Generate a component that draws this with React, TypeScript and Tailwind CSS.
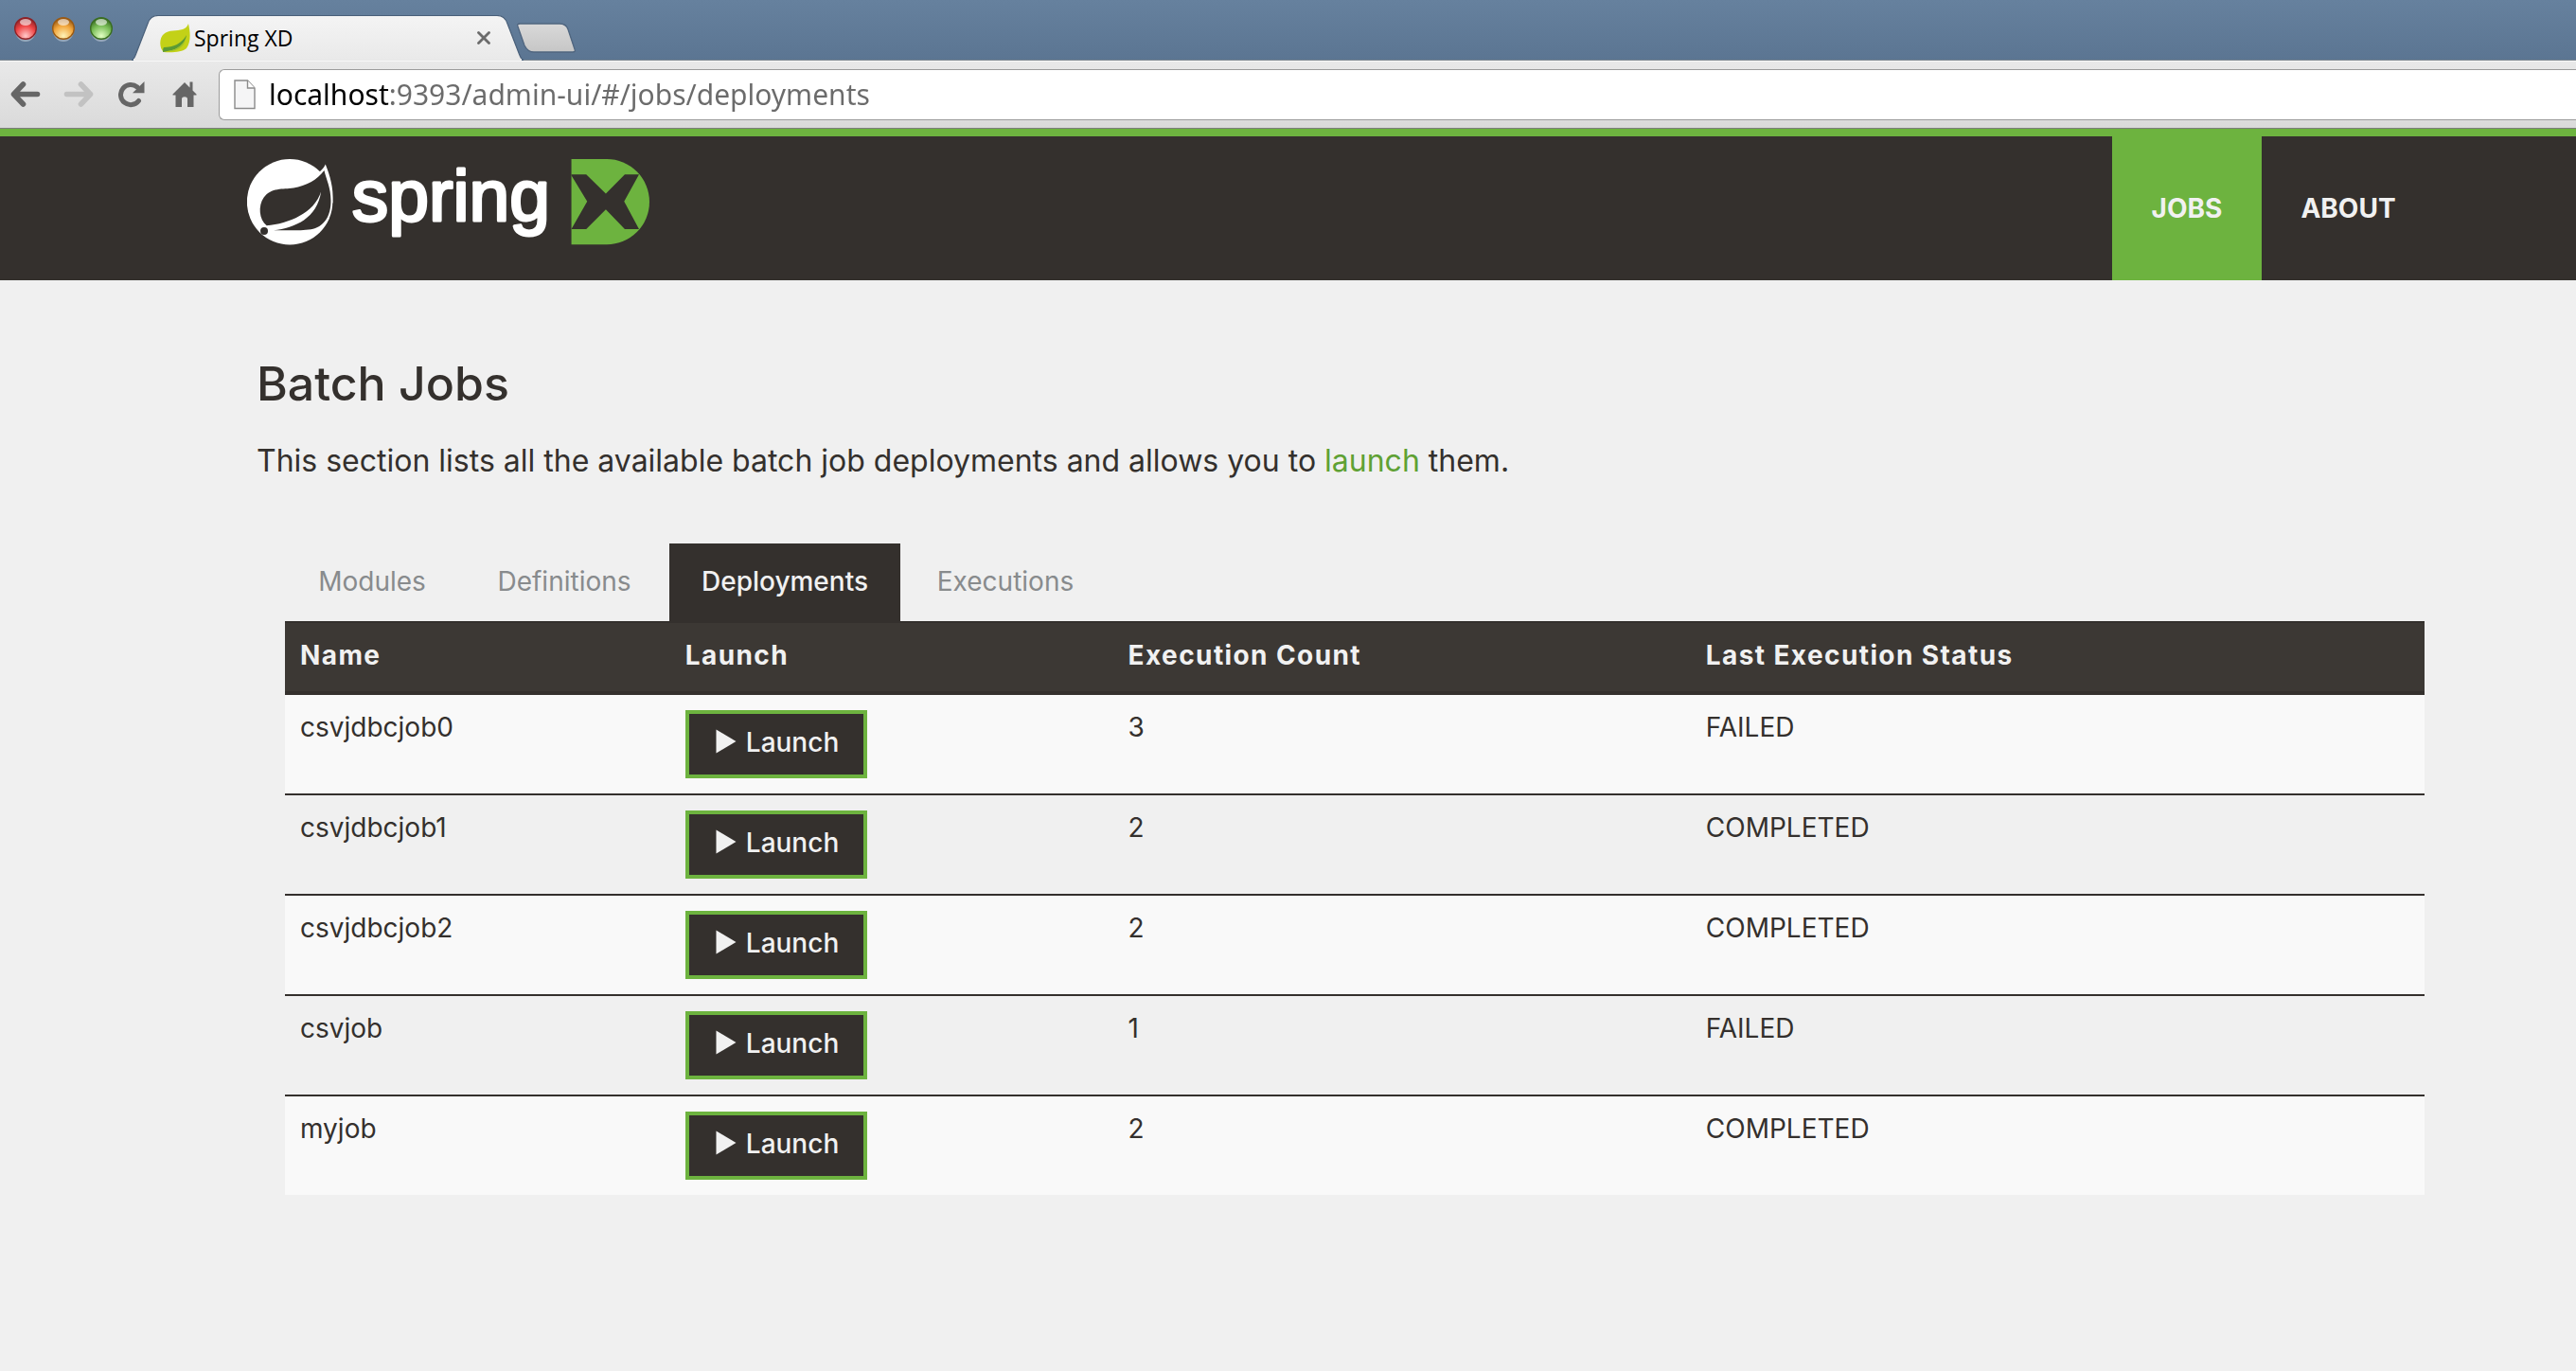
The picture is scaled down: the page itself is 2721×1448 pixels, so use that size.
import { useState } from "react";

const tabs = [
  { label: "Modules", width: "w-[184px]" },
  { label: "Definitions", width: "w-[214px]" },
  { label: "Deployments", width: "w-[244px]" },
  { label: "Executions", width: "w-[214px]" },
];

const jobs = [
  { name: "csvjdbcjob0", count: 3, status: "FAILED" },
  { name: "csvjdbcjob1", count: 2, status: "COMPLETED" },
  { name: "csvjdbcjob2", count: 2, status: "COMPLETED" },
  { name: "csvjob", count: 1, status: "FAILED" },
  { name: "myjob", count: 2, status: "COMPLETED" },
];

function WindowLight({ id, edge, mid, glow, label }: { id: string; edge: string; mid: string; glow: string; label: string }) {
  return (
    <button type="button" aria-label={label} className="h-[26px] w-6">
      <svg viewBox="0 0 24 26" className="h-[26px] w-6" aria-hidden="true">
        <defs>
          <radialGradient id={id} cx="0.5" cy="0.85" r="0.8">
            <stop offset="0" stopColor={glow} />
            <stop offset="0.6" stopColor={mid} />
            <stop offset="1" stopColor={edge} />
          </radialGradient>
        </defs>
        <ellipse cx="12" cy="14" rx="11" ry="12" fill="#ffffff" opacity="0.35" />
        <circle cx="12" cy="12" r="11.3" fill={`url(#${id})`} stroke={edge} strokeWidth="1.4" />
        <ellipse cx="12" cy="5.500" rx="6" ry="3.4" fill="#ffffff" opacity="0.6" />
      </svg>
    </button>
  );
}

function Favicon() {
  return (
    <svg viewBox="0 0 32 32" className="h-8 w-8" aria-hidden="true">
      <path d="M30 1C32 10 33 20 28 27C24 31 12 32 4 31C-1 27-1 16 4 12C9 7 18 9 24 7C27 6 29 4 30 1Z" fill="#c3d117" />
      <path d="M3 31C3 29 3 27 4 26C14 26 23 22 28 13C27 22 18 29 8 30Z" fill="#5b9a35" />
      <path d="M7 30C15 30 23 25 27 18C25 26 17 31 7 30Z" fill="#9cc02b" />
    </svg>
  );
}

function BrowserTabs() {
  return (
    <div className="flex h-16 bg-linear-to-b from-[#66819e] to-[#5b7592] pl-[15px] shadow-[inset_0_-1px_0_#7c868f]">
      <div className="flex gap-4 pt-[18px]">
        <WindowLight id="light-red" label="Close window" edge="#8e2327" mid="#ef4444" glow="#ffc9c9" />
        <WindowLight id="light-amber" label="Minimise window" edge="#9a5a14" mid="#f2a63c" glow="#fff3b8" />
        <WindowLight id="light-green" label="Zoom window" edge="#3a6e22" mid="#79bd57" glow="#e2ffc4" />
      </div>
      <div className="relative mt-4 ml-5 h-12 w-[414px]">
        <svg viewBox="0 0 414 48" className="absolute inset-0 h-12 w-[414px]" aria-hidden="true">
          <defs>
            <linearGradient id="tab-fill" x1="0" y1="0" x2="0" y2="1">
              <stop offset="0" stopColor="#f4f4f4" />
              <stop offset="1" stopColor="#e9e9e9" />
            </linearGradient>
          </defs>
          <path
            d="M-2 48C2 48 3 45 5 40L17 9C19 3 22 0.5 28 0.5H386C392 0.5 395 3 397 9L409 40C411 45 412 48 416 48Z"
            fill="url(#tab-fill)"
            stroke="#4a607a"
            strokeWidth="1.2"
          />
          <rect x="2" y="46" width="410" height="2" fill="#e9e9e9" />
        </svg>
        <div className="relative flex h-full items-center pr-[35px] pl-[30px]">
          <Favicon />
          <span className="ml-1 font-['Open_Sans','Noto_Sans',sans-serif] text-[23px] leading-8 text-black">Spring XD</span>
          <button type="button" aria-label="Close tab" className="ml-auto">
            <svg viewBox="0 0 14 14" className="h-3.5 w-3.5" aria-hidden="true">
              <path d="M1.5 1.5L12.5 12.5M12.5 1.5L1.5 12.5" stroke="#6b6b6b" strokeWidth="2.8" strokeLinecap="round" />
            </svg>
          </button>
        </div>
      </div>
      <button type="button" aria-label="New tab" className="relative -ml-2 h-8 pt-6">
        <svg viewBox="0 0 64 33" className="h-[33px] w-16" aria-hidden="true">
          <defs>
            <linearGradient id="new-tab-fill" x1="0" y1="0" x2="0" y2="1">
              <stop offset="0" stopColor="#d9d9d9" />
              <stop offset="1" stopColor="#c6c6c6" />
            </linearGradient>
          </defs>
          <path
            d="M4 1H46C51 1 54 4 55 7L62 28C63 30 62 31 60 31H19C14 31 11 28 9 24L2 4C1 2 2 1 4 1Z"
            fill="url(#new-tab-fill)"
            stroke="#4f657f"
            strokeWidth="1.3"
          />
        </svg>
      </button>
    </div>
  );
}

function ArrowIcon() {
  return (
    <svg viewBox="0 0 32 28" className="h-7 w-8" fill="none" stroke="currentColor" strokeWidth="5.600" strokeLinecap="round" strokeLinejoin="round" aria-hidden="true">
      <path d="M28.500 13.500H5M13.500 3L3.500 13.500L13.500 24" />
    </svg>
  );
}

function BrowserToolbar() {
  const [url, setUrl] = useState("localhost:9393/admin-ui/#/jobs/deployments");
  return (
    <div className="flex h-[72px] items-center border-t border-b border-t-[#f7f7f7] border-b-[#7d7d7d] bg-linear-to-b from-[#e9e9e9] to-[#dadada] pl-[11px] text-[#666666]">
      <button type="button" aria-label="Back">
        <ArrowIcon />
      </button>
      <button type="button" aria-label="Forward" className="ml-6 -scale-x-100 text-[#c2c2c2]">
        <ArrowIcon />
      </button>
      <button type="button" aria-label="Reload" className="ml-[26px]">
        <svg viewBox="0 0 30 28" className="h-7 w-[30px]" fill="none" aria-hidden="true">
          <path d="M21.500 20.500A10.600 10.600 0 1 1 20 6" stroke="currentColor" strokeWidth="5" strokeLinecap="round" />
          <path d="M27.500 0V12.300H15Z" fill="currentColor" />
        </svg>
      </button>
      <button type="button" aria-label="Home" className="ml-[26px]">
        <svg viewBox="0 0 28 28" className="h-7 w-7" fill="currentColor" aria-hidden="true">
          <path d="M14 1L19.500 6.500V0.500H22.500V9.500L26.500 13.500V14.500H23.500V27H17V18.500C17 15.500 11 15.500 11 18.500V27H4.500V14.500H1.500V13.500Z" />
        </svg>
      </button>
      <label className="ml-[22px] flex h-[54px] flex-1 items-center rounded-l-md border border-r-0 border-[#9c9c9c] bg-white pl-[15px]">
        <svg viewBox="0 0 23 32" className="h-8 w-[23px]" aria-hidden="true">
          <path d="M1 1H14.500L22 9V30.500H1Z" fill="#f5f5f6" stroke="#8b8b8b" strokeWidth="1.400" />
          <path d="M14.500 1V9H22" fill="#ffffff" stroke="#8b8b8b" strokeWidth="1.400" />
        </svg>
        <input
          type="text"
          aria-label="Address"
          value={url}
          onChange={(e) => setUrl(e.target.value)}
          className="h-[52px] min-w-0 flex-1 bg-[linear-gradient(to_right,#000000_143px,#6b6b6b_143px)] bg-clip-text px-3.5 pb-0.5 font-['Noto_Sans','Open_Sans',sans-serif] text-[30px] leading-10 text-transparent outline-none"
        />
      </label>
    </div>
  );
}

function SpringLogo() {
  return (
    <svg viewBox="63 90 1273 296" className="h-[99px] w-[425px]" role="img" aria-label="Spring XD">
      <circle cx="198" cy="249" r="135.500" fill="#ffffff" />
      <path d="M270 170C285 160 303 148 311 130C325 165 337 205 334 250L320 310L290 250Z" fill="#ffffff" />
      <path
        d="M307 150C314 180 328 205 328 245C329 295 305 330 265 336C225 341 190 339 147 339C215 332 285 300 297 217C275 285 195 318 125 324C101 305 97 262 116 235C140 203 175 210 210 205C250 199 285 180 307 150Z"
        fill="#34302d"
      />
      <circle cx="117" cy="341" r="12" fill="#34302d" />
      <text
        x="395"
        y="308"
        fontFamily="'Liberation Sans', Arial, sans-serif"
        fontSize="230"
        fill="#ffffff"
        stroke="#ffffff"
        strokeWidth="9"
        strokeLinejoin="round"
      >
        spring
      </text>
      <path d="M1089 114H1201A135 135 0 0 1 1201 384H1089Z" fill="#6db33f" />
      <path
        d="M1089 162H1136L1198 223L1258 162H1303L1256 248L1303 335H1258L1198 273L1136 335H1089L1139 248L1089 165Z"
        fill="#34302d"
      />
    </svg>
  );
}

function SiteHeader() {
  return (
    <header className="flex h-40 justify-between border-t-8 border-[#6db33f] bg-[#34302d] pr-[149px] pl-[261px]">
      <a href="#home" className="pt-4">
        <SpringLogo />
      </a>
      <nav className="flex text-[28px] leading-9 font-bold text-[#f1f1f1]">
        <a href="#jobs" className="flex w-[158px] items-center justify-center bg-[#6db33f]">
          JOBS
        </a>
        <a href="#about" className="flex w-[183px] items-center justify-center">
          ABOUT
        </a>
      </nav>
    </header>
  );
}

function LaunchButton({ name }: { name: string }) {
  return (
    <button
      type="button"
      aria-label={`Launch ${name}`}
      className="flex w-48 items-start border-4 border-[#6db33f] bg-[#34302d] pt-3 pb-4 pl-7 leading-9 font-medium text-[#f1f1f1]"
    >
      <svg viewBox="0 0 22 26" className="mt-1 mr-2.5 h-[26px] w-[22px]" fill="currentColor" aria-hidden="true">
        <path d="M0.500 0.500L21.500 13L0.500 25.500Z" />
      </svg>
      Launch
    </button>
  );
}

export default function App() {
  const [active, setActive] = useState("Deployments");
  return (
    <div className="min-h-screen bg-[#f0f0f0] font-['Inter','Open_Sans',sans-serif] text-[#34302d]">
      <BrowserTabs />
      <BrowserToolbar />
      <SiteHeader />
      <main className="pt-[85px] pr-40 pl-[271px]">
        <h1 className="text-[50px] leading-12 font-medium">Batch Jobs</h1>
        <p className="mt-[38px] text-[32px] leading-10">
          This section lists all the available batch job deployments and allows you to{" "}
          <a href="#launch" className="text-[#5fa134]">
            launch
          </a>{" "}
          them.
        </p>
        <div className="mt-[67px] ml-[30px] text-[28px] leading-9">
          <div role="tablist" className="flex gap-1">
            {tabs.map((tab) => (
              <button
                key={tab.label}
                type="button"
                role="tab"
                aria-selected={tab.label === active}
                onClick={() => setActive(tab.label)}
                className={`${tab.width} pt-[22px] pb-6 text-center ${
                  tab.label === active ? "bg-[#34302d] font-medium text-[#f1f1f1]" : "text-[#888b8d]"
                }`}
              >
                {tab.label}
              </button>
            ))}
          </div>
          <table className="w-full table-fixed border-separate border-spacing-0 text-left">
            <colgroup>
              <col className="w-[18%]" />
              <col className="w-[20.7%]" />
              <col className="w-[27%]" />
              <col />
            </colgroup>
            <thead className="bg-[#3c3834] text-[#f1f1f1]">
              <tr>
                {["Name", "Launch", "Execution Count", "Last Execution Status"].map((heading) => (
                  <th key={heading} scope="col" className="border-y-2 border-[#34302d] px-4 pt-4 pb-5 font-bold tracking-wider">
                    {heading}
                  </th>
                ))}
              </tr>
            </thead>
            <tbody>
              {jobs.map((job) => (
                <tr key={job.name} className="align-top odd:bg-[#f9f9f9]">
                  <td className="border-t-2 border-[#34302d] px-4 py-4">{job.name}</td>
                  <td className="border-t-2 border-[#34302d] px-4 py-4">
                    <LaunchButton name={job.name} />
                  </td>
                  <td className="border-t-2 border-[#34302d] px-4 py-4">{job.count}</td>
                  <td className="border-t-2 border-[#34302d] px-4 py-4">{job.status}</td>
                </tr>
              ))}
            </tbody>
          </table>
        </div>
      </main>
    </div>
  );
}
